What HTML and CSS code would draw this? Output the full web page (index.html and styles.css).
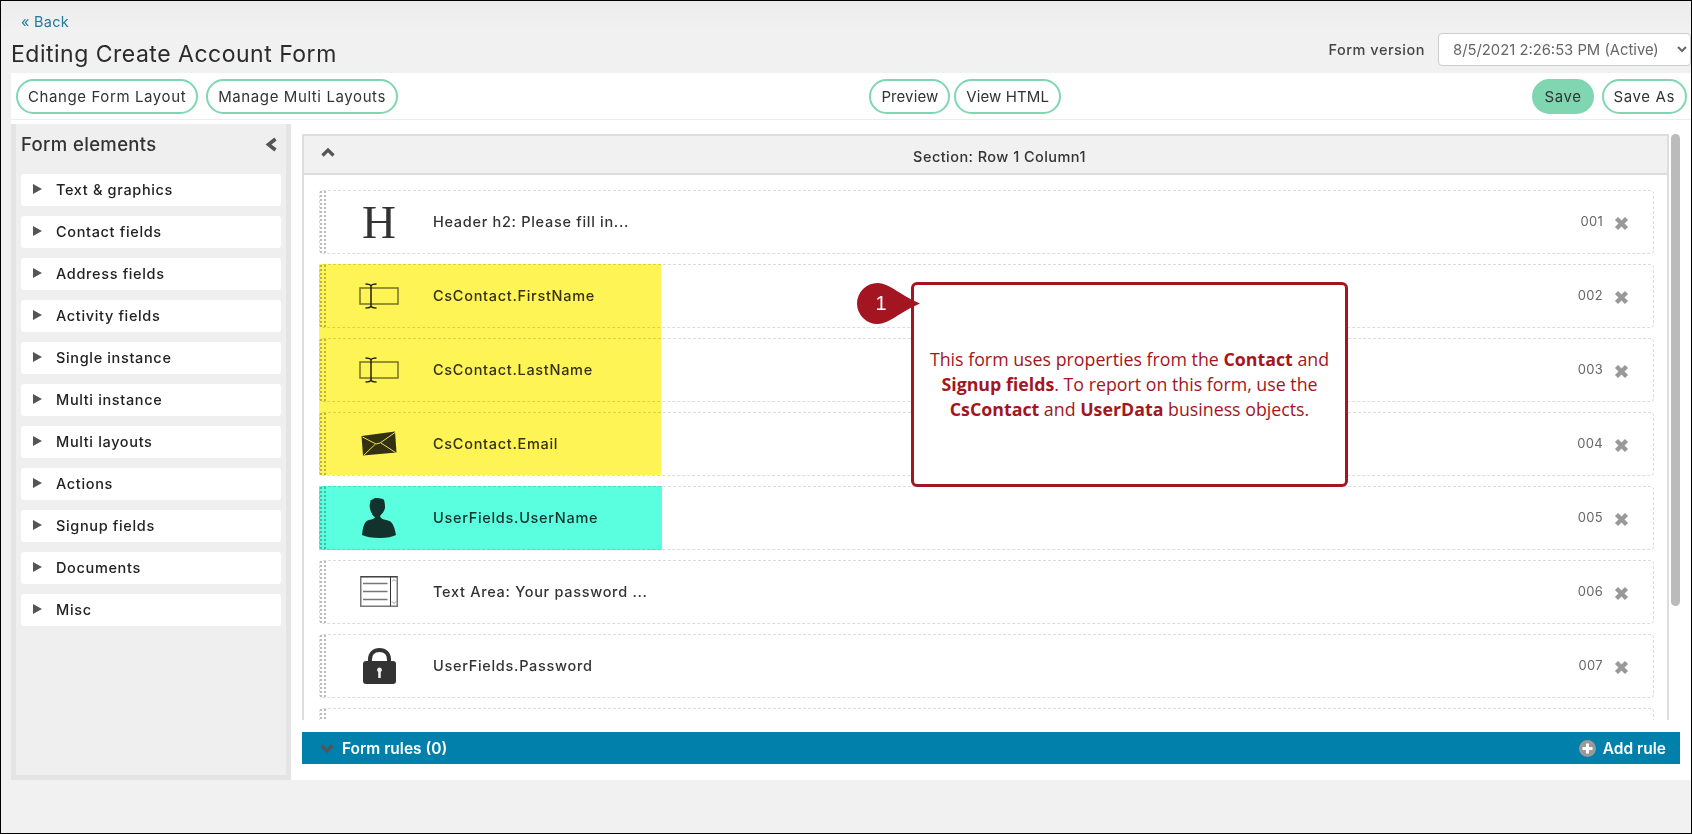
FILE: index.html
```html
<!DOCTYPE html>
<html lang="en">
<head>
<meta charset="utf-8">
<title>Editing Create Account Form</title>
<link rel="stylesheet" href="styles.css">
</head>
<body>
<div class="frame">
  <header class="top">
    <div class="top-left">
      <a class="back" href="#">« Back</a>
      <h1 class="title">Editing Create Account Form</h1>
    </div>
    <div class="version">
      <label class="version-label" for="ver">Form version</label>
      <select class="version-select" id="ver"><option>8/5/2021 2:26:53 PM (Active)</option></select>
    </div>
  </header>

  <nav class="toolbar">
    <div class="group"><button class="btn">Change Form Layout</button><button class="btn btn-wide">Manage Multi Layouts</button></div>
    <div class="group group-tight"><button class="btn btn-tight">Preview</button><button class="btn btn-tight">View HTML</button></div>
    <div class="group"><button class="btn btn-fill">Save</button><button class="btn">Save As</button></div>
  </nav>

  <main class="main">
    <aside class="sidebar">
      <div class="side-head">
        <span class="side-title">Form elements</span>
        <svg class="side-collapse" width="15" height="15" viewBox="0 0 15 15"><path d="M11.500 2 4.500 7.500l7 5.500" fill="none" stroke="#555" stroke-width="3.600"/></svg>
      </div>
      <ul class="side-list">
        <li class="side-item"><i class="tri"></i>Text &amp; graphics</li>
        <li class="side-item"><i class="tri"></i>Contact fields</li>
        <li class="side-item"><i class="tri"></i>Address fields</li>
        <li class="side-item"><i class="tri"></i>Activity fields</li>
        <li class="side-item"><i class="tri"></i>Single instance</li>
        <li class="side-item"><i class="tri"></i>Multi instance</li>
        <li class="side-item"><i class="tri"></i>Multi layouts</li>
        <li class="side-item"><i class="tri"></i>Actions</li>
        <li class="side-item"><i class="tri"></i>Signup fields</li>
        <li class="side-item"><i class="tri"></i>Documents</li>
        <li class="side-item"><i class="tri"></i>Misc</li>
      </ul>
    </aside>

    <section class="content">
      <div class="scroller">
        <div class="section">
          <div class="section-head">
            <svg class="section-chev" width="14" height="12" viewBox="0 0 14 12"><path d="M1.500 9.500 7 4l5.500 5.500" fill="none" stroke="#555" stroke-width="3.200"/></svg>
            <span>Section: Row 1 Column1</span>
          </div>
          <div class="section-body">
            <div class="row">
              <i class="handle"></i>
              <span class="row-icon"><span class="h-icon">H</span></span>
              <span class="row-label">Header h2: Please fill in...</span>
              <span class="row-num">001</span>
              <svg class="row-x" width="15" height="15" viewBox="0 0 15 15"><path d="M2.500 2.500l10 10M12.500 2.500l-10 10" stroke="#999" stroke-width="4.400"/></svg>
            </div>
            <div class="row">
              <i class="handle"></i>
              <span class="row-icon"><svg width="40" height="28" viewBox="0 0 40 28"><rect x="1" y="6" width="38" height="16" fill="none" stroke="#777" stroke-width="1.500"/><path d="M6.500 2c3 0 5 .5 5.500 2v20c-.5 1.500-2.500 2-5.500 2M17.500 2c-3 0-5 .5-5.500 2v20c.5 1.500 2.500 2 5.500 2" fill="none" stroke="#222" stroke-width="1.500"/></svg></span>
              <span class="row-label">CsContact.FirstName</span>
              <span class="row-num">002</span>
              <svg class="row-x" width="15" height="15" viewBox="0 0 15 15"><path d="M2.500 2.500l10 10M12.500 2.500l-10 10" stroke="#999" stroke-width="4.400"/></svg>
            </div>
            <div class="row">
              <i class="handle"></i>
              <span class="row-icon"><svg width="40" height="28" viewBox="0 0 40 28"><rect x="1" y="6" width="38" height="16" fill="none" stroke="#777" stroke-width="1.500"/><path d="M6.500 2c3 0 5 .5 5.500 2v20c-.5 1.500-2.500 2-5.500 2M17.500 2c-3 0-5 .5-5.500 2v20c.5 1.500 2.500 2 5.500 2" fill="none" stroke="#222" stroke-width="1.500"/></svg></span>
              <span class="row-label">CsContact.LastName</span>
              <span class="row-num">003</span>
              <svg class="row-x" width="15" height="15" viewBox="0 0 15 15"><path d="M2.500 2.500l10 10M12.500 2.500l-10 10" stroke="#999" stroke-width="4.400"/></svg>
            </div>
            <div class="row">
              <i class="handle"></i>
              <span class="row-icon"><svg width="36" height="26" viewBox="0 0 36 26"><path d="M.5 5 34 .5l1.500 21L2 24.500z" fill="#333"/><path d="M1.500 6 15 13l4-1 15-10.500M3 24l11.500-11M20 12l14.500 9.500" fill="none" stroke="#fff" stroke-width=".9"/></svg></span>
              <span class="row-label">CsContact.Email</span>
              <span class="row-num">004</span>
              <svg class="row-x" width="15" height="15" viewBox="0 0 15 15"><path d="M2.500 2.500l10 10M12.500 2.500l-10 10" stroke="#999" stroke-width="4.400"/></svg>
            </div>
            <div class="row">
              <i class="handle"></i>
              <span class="row-icon"><svg width="35" height="41" viewBox="0 0 35 41"><path d="M7.700 3 13 0c4 0 8 .5 9 2 1 3 1 6 1 8-.5 3-3 6-5 8 .5 2 2 3 4 3.500 3 .5 5 1 7 2.500 3 3 4 8 5 13-4 2-9 3-16 3-8 0-14-1-18-3 .5-4 1-8 2-10 1-3 3-4.500 5-5 3-.5 5-1.500 6-2.500-1-1.500-3-2-3-4-1-1-1.500-3-2-5-.5-2-.5-5 .7-7z" fill="#333"/></svg></span>
              <span class="row-label">UserFields.UserName</span>
              <span class="row-num">005</span>
              <svg class="row-x" width="15" height="15" viewBox="0 0 15 15"><path d="M2.500 2.500l10 10M12.500 2.500l-10 10" stroke="#999" stroke-width="4.400"/></svg>
            </div>
            <div class="row">
              <i class="handle"></i>
              <span class="row-icon"><svg width="38" height="32" viewBox="0 0 38 32"><rect x=".75" y=".75" width="36.500" height="29.500" fill="#fff" stroke="#777" stroke-width="1.500"/><path d="M.75.75h36.500M30.500 1v29" fill="none" stroke="#333" stroke-width="1"/><path d="M3 7.500h24.500M3 15.500h24.500M3 23.500h24.500" stroke="#777" stroke-width="1.500"/><path d="M32 5.500l2-2 2 2M32 25.500l2 2 2-2" fill="none" stroke="#777" stroke-width=".8"/></svg></span>
              <span class="row-label">Text Area: Your password ...</span>
              <span class="row-num">006</span>
              <svg class="row-x" width="15" height="15" viewBox="0 0 15 15"><path d="M2.500 2.500l10 10M12.500 2.500l-10 10" stroke="#999" stroke-width="4.400"/></svg>
            </div>
            <div class="row">
              <i class="handle"></i>
              <span class="row-icon"><svg width="33" height="36" viewBox="0 0 33 36"><path d="M7 16V11.500C7 5.500 11 2 16.500 2S26 5.500 26 11.500V16" fill="none" stroke="#333" stroke-width="4"/><rect y="13" width="33" height="23" rx="3" fill="#333"/><path d="M16.500 19.500a2.500 2.500 0 0 1 1.300 4.600V30h-2.600v-5.900a2.500 2.500 0 0 1 1.300-4.600z" fill="#eee"/></svg></span>
              <span class="row-label">UserFields.Password</span>
              <span class="row-num">007</span>
              <svg class="row-x" width="15" height="15" viewBox="0 0 15 15"><path d="M2.500 2.500l10 10M12.500 2.500l-10 10" stroke="#999" stroke-width="4.400"/></svg>
            </div>
            <div class="row"><i class="handle"></i></div>
            <div class="mark mark-yellow"></div>
            <div class="mark mark-cyan"></div>
          </div>
        </div>
        <div class="scrollbar"><div class="scroll-thumb"></div></div>
      </div>

      <div class="rules">
        <svg class="rules-chev" width="14" height="12" viewBox="0 0 14 12"><path d="M1.500 2.500 7 8l5.500-5.500" fill="none" stroke="#555" stroke-width="3.200"/></svg>
        <span class="rules-title">Form rules (0)</span>
        <span class="rules-add">
          <svg width="17" height="17" viewBox="0 0 17 17"><circle cx="8.500" cy="8.500" r="8.500" fill="#999"/><path d="M8.500 3.500v10M3.500 8.500h10" stroke="#fff" stroke-width="3"/></svg>
          Add rule
        </span>
      </div>
    </section>

    <div class="pin">
      <svg class="pin-shape" width="63" height="41" viewBox="0 0 63 41"><path d="M20.500 0C32 0 43 12 63 20.500 43 29 32 41 20.500 41a20.500 20.500 0 0 1 0-41z" fill="#a31621"/></svg>
      <span class="pin-num">1</span>
    </div>
    <div class="callout">
      <p>This form uses properties from the <b>Contact</b> and <b>Signup fields</b>. To report on this form, use the <b>CsContact</b> and <b>UserData</b> business objects.</p>
    </div>
  </main>
</div>
</body>
</html>
```

FILE: styles.css
```css
* { box-sizing: border-box; }
html, body { margin: 0; padding: 0; }
body { font-family: "Inter", "Liberation Sans", sans-serif; color: #333; background: #f1f1f1; }

.frame {
  width: 1692px; height: 834px; border: 1px solid #000;
  background: linear-gradient(#ececec 0, #f1f1f1 30px);
  padding-left: 10px; overflow: hidden;
  display: flex; flex-direction: column;
}

.top { height: 72px; flex: none; display: flex; justify-content: space-between; }
.top-left { display: flex; flex-direction: column; }
.back { margin: 14px 0 0 10px; font-size: 14.500px; line-height: 14px; color: #1f7a9c; text-decoration: none; letter-spacing: .25px; }
.title { margin: 9px 0 0 0; font-size: 23px; line-height: 32px; font-weight: 400; color: #2b2b2b; letter-spacing: .5px; }
.version { display: flex; align-items: center; gap: 13px; margin-top: 32px; height: 33px; }
.version-label { font-size: 14.500px; font-weight: 550; color: #444; letter-spacing: .5px; }
.version-select {
  width: 253px; height: 33px; padding: 0 0 0 10px; background: #fff; border: 1px solid #ccc; border-radius: 4px;
  font-family: "Inter", sans-serif; font-size: 14.800px; color: #666;
}

.toolbar {
  height: 47px; flex: none; background: #fff; border-bottom: 1px solid #ececec;
  padding: 6px 4px 0 5px; display: flex; justify-content: space-between; align-items: flex-start;
}
.group { display: flex; gap: 8px; }
.group-tight { gap: 4px; }
.btn {
  height: 35px; padding: 0 10px; border: 2px solid #7fd6b0; border-radius: 18px; background: #fff;
  font-family: "Inter", sans-serif; font-size: 15px; color: #333; letter-spacing: .6px;
}
.btn-tight { letter-spacing: .1px; }
.btn-fill { background: #7fd6b0; }

.main { position: relative; height: 660px; flex: none; background: #fff; display: flex; }

.sidebar {
  width: 280px; flex: none; margin-top: 4px; background: #efefef; border: 5px solid #e4e4e4; border-top: 0;
}
.side-head { height: 50px; display: flex; align-items: center; justify-content: space-between; padding: 0 7px 10px 5px; }
.side-title { font-size: 18.500px; font-weight: 550; color: #333; letter-spacing: .35px; }
.side-list { list-style: none; margin: 0; padding: 0 5px; display: flex; flex-direction: column; gap: 10px; }
.side-item {
  height: 32px; background: #fff; border-radius: 3px; display: flex; align-items: center;
  font-size: 14.500px; font-weight: 550; color: #222; letter-spacing: .65px; padding: 0 0 2px 12px;
}
.tri { width: 0; height: 0; border-left: 9px solid #555; border-top: 5.500px solid transparent; border-bottom: 5.500px solid transparent; margin-right: 14px; }

.content { flex: 1; min-width: 0; padding: 14px 11px 0 11px; display: flex; flex-direction: column; }
.scroller { height: 586px; flex: none; display: flex; gap: 2px; overflow: hidden; }
.section { width: 1367px; flex: none; border: 2px solid #ddd; border-bottom: 0; display: flex; flex-direction: column; }
.section-head {
  height: 39px; flex: none; background: #f1f1f1; border-bottom: 2px solid #ddd; position: relative;
  display: flex; align-items: center; justify-content: center; padding: 3px 0 0 28px;
  font-size: 14.500px; font-weight: 550; color: #333; letter-spacing: .45px;
}
.section-chev { position: absolute; left: 17px; top: 10px; }
.section-body { position: relative; flex: 1; padding: 15px 13px 0 15px; display: flex; flex-direction: column; gap: 10px; overflow: hidden; }
.row {
  height: 64px; flex: none; border: 1px dashed #dcdcdc; border-radius: 4px; display: flex; align-items: center; padding-right: 24px;
}
.handle { width: 6px; align-self: stretch; border-left: 2px dotted #bbb; border-right: 2px dotted #bbb; flex: none; }
.row-icon { width: 74px; margin-left: 16px; flex: none; display: flex; justify-content: center; align-items: center; }
.h-icon { font-family: "Liberation Serif", serif; font-size: 47px; line-height: 50px; color: #333; }
.row-label { margin: -2px 0 0 17px; font-size: 14.500px; font-weight: 550; color: #333; letter-spacing: .7px; }
.row-num { margin-left: auto; margin-top: -3px; font-size: 13px; color: #666; letter-spacing: .3px; }
.row-x { margin-left: 11px; margin-top: 3px; }
.mark { position: absolute; left: 15px; mix-blend-mode: multiply; }
.mark-yellow { top: 89px; width: 342px; height: 211px; background: #fff455; }
.mark-cyan { top: 311px; width: 343px; height: 64px; background: #5affe0; }

.scrollbar { width: 10px; }
.scroll-thumb { height: 472px; background: #bbb; border-radius: 5px; }

.rules {
  margin-top: 12px; height: 32px; width: 1378px; flex: none; background: #0080ab; color: #fff;
  display: flex; align-items: center; padding: 0 14px 0 18px;
  font-size: 15.500px; font-weight: 600;
}
.rules-chev { margin-right: 8px; margin-top: 2px; }
.rules-add { margin-left: auto; display: flex; align-items: center; gap: 7px; }

.callout {
  position: absolute; left: 900px; top: 162px; width: 437px; height: 205px;
  background: #fff; border: 3px solid #a31621; border-radius: 6px;
  display: flex; align-items: center; justify-content: center; padding: 0 10px;
  font-family: "Open Sans", sans-serif; font-size: 17.800px; line-height: 25px; color: #a31621; text-align: center;
}
.callout p { margin: 0; }
.pin { position: absolute; left: 846px; top: 163px; width: 63px; height: 41px; z-index: 2; }
.pin-shape { display: block; }
.pin-num {
  position: absolute; left: 0; top: 0; width: 48px; height: 41px; display: flex; align-items: center; justify-content: center;
  font-family: "Liberation Sans", sans-serif; font-size: 20px; color: #fff;
}
```
